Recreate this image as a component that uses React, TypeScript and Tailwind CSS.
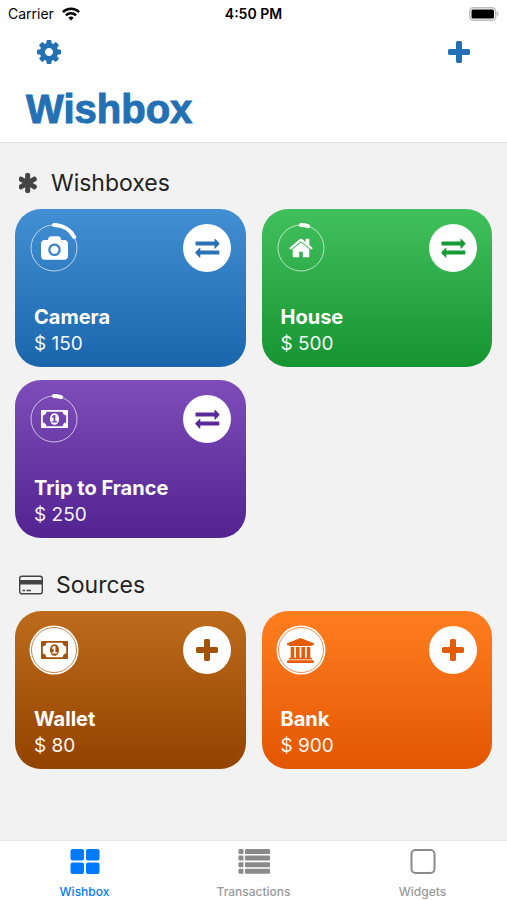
import React, { useState } from 'react';
import clsx from 'clsx';

type IconName = 'camera' | 'house' | 'money' | 'bank';

interface Box {
  id: string;
  name: string;
  amount: number;
  icon: IconName;
  progress: number;
  background: string;
  accent: string;
}

const wishboxes: Box[] = [
  {
    id: 'camera',
    name: 'Camera',
    amount: 150,
    icon: 'camera',
    progress: 0.17,
    background: 'from-[#428fd3] to-[#1a66ac]',
    accent: 'text-[#2a72b5]',
  },
  {
    id: 'house',
    name: 'House',
    amount: 500,
    icon: 'house',
    progress: 0.05,
    background: 'from-[#40c05c] to-[#159432]',
    accent: 'text-[#159a35]',
  },
  {
    id: 'france',
    name: 'Trip to France',
    amount: 250,
    icon: 'money',
    progress: 0.05,
    background: 'from-[#7e4dba] to-[#532391]',
    accent: 'text-[#5a2a9a]',
  },
];

const sources: Box[] = [
  {
    id: 'wallet',
    name: 'Wallet',
    amount: 80,
    icon: 'money',
    progress: 1,
    background: 'from-[#bd6b1b] to-[#934300]',
    accent: 'text-[#a3520a]',
  },
  {
    id: 'bank',
    name: 'Bank',
    amount: 900,
    icon: 'bank',
    progress: 1,
    background: 'from-[#ff7e1f] to-[#e35600]',
    accent: 'text-[#e55c08]',
  },
];

const CogIcon = () => (
  <svg viewBox="128 128 1536 1536" className="size-6" fill="currentColor" aria-hidden="true">
    <path d="M1152 896q0-106-75-181t-181-75-181 75-75 181 75 181 181 75 181-75 75-181zm512-109v222q0 12-8 23t-20 13l-185 28q-19 54-39 91 35 50 107 138 10 12 10 25t-9 23q-27 37-99 108t-94 71q-12 0-26-9l-138-108q-44 23-91 38-16 136-29 186-7 28-36 28h-222q-14 0-24.500-8.500t-11.500-21.500l-28-184q-49-16-90-37l-141 107q-10 9-25 9-14 0-25-11-126-114-165-168-7-10-7-23 0-12 8-23 15-21 51-66.500t54-70.500q-27-50-41-99l-183-27q-13-2-21-12.500t-8-23.500v-222q0-12 8-23t19-13l186-28q14-46 39-92-40-57-107-138-10-12-10-24 0-10 9-23 26-36 98.500-107.500t94.500-71.500q13 0 26 10l138 107q44-23 91-38 16-136 29-186 7-28 36-28h222q14 0 24.500 8.500t11.500 21.500l28 184q49 16 90 37l142-107q9-9 24-9 13 0 25 10 129 119 165 170 7 8 7 22 0 12-8 23-15 21-51 66.500t-54 70.500q26 50 41 98l183 28q13 2 21 12.500t8 23.500z" />
  </svg>
);

const PlusIcon = () => (
  <svg viewBox="192 128 1408 1408" className="size-[22px]" fill="currentColor" aria-hidden="true">
    <path d="M1600 736v192q0 40-28 68t-68 28h-416v416q0 40-28 68t-68 28h-192q-40 0-68-28t-28-68v-416h-416q-40 0-68-28t-28-68v-192q0-40 28-68t68-28h416v-416q0-40 28-68t68-28h192q40 0 68 28t28 68v416h416q40 0 68 28t28 68z" />
  </svg>
);

const ExchangeIcon = () => (
  <svg viewBox="0 0 26 20" className="h-5 w-[26px]" fill="currentColor" aria-hidden="true">
    <path d="M1.900 3.500h18.600v-2.200q0-1 .8-.4l3.900 4.200q.7.600 0 1.200l-3.900 4.200q-.8.600-.8-.4v-2.600h-18.600q-.4 0-.4-.4v-3.200q0-.4.400-.4z" />
    <path d="M24.900 12.500h-18.600v-2.200q0-1-.8-.4l-3.900 4.200q-.7.600 0 1.200l3.900 4.200q.8.600.8-.4v-2.600h18.600q.4 0 .4-.4v-3.200q0-.4-.4-.4z" />
  </svg>
);

const AsteriskIcon = () => (
  <svg viewBox="192 128 1408 1536" className="h-5 w-[19px]" fill="currentColor" aria-hidden="true">
    <path d="M1482 1050q46 26 59.500 77.500t-12.500 97.500l-64 110q-26 46-77.500 59.500t-97.500-12.500l-266-153v307q0 52-38 90t-90 38h-128q-52 0-90-38t-38-90v-307l-266 153q-46 26-97.500 12.500t-77.500-59.500l-64-110q-26-46-12.500-97.500t59.500-77.500l266-154-266-154q-46-26-59.500-77.500t12.500-97.500l64-110q26-46 77.500-59.500t97.500 12.500l266 153v-307q0-52 38-90t90-38h128q52 0 90 38t38 90v307l266-153q46-26 97.500-12.500t77.500 59.500l64 110q26 46 12.500 97.500t-59.500 77.500l-266 154z" />
  </svg>
);

const CardIcon = () => (
  <svg viewBox="0 0 24 20" className="h-5 w-6" aria-hidden="true">
    <rect x="0.700" y="1.200" width="22.600" height="17.600" rx="2.200" fill="none" stroke="currentColor" strokeWidth="1.400" />
    <path d="M.7 5h22.600v4.500H.7zM3.500 14.800h2.500v1.500H3.500zM7.500 14.800h4.500v1.500H7.500z" fill="currentColor" />
  </svg>
);

const BoxIcon = ({ name }: { name: IconName }) => {
  switch (name) {
    case 'camera':
      return (
        <svg viewBox="-64 0 1920 1664" className="h-6 w-[27px]" fill="currentColor" aria-hidden="true">
          <path d="M896 672q119 0 203.500 84.500t84.500 203.500-84.500 203.500-203.500 84.500-203.500-84.500-84.500-203.500 84.500-203.500 203.500-84.500zm704-416q106 0 181 75t75 181v896q0 106-75 181t-181 75h-1408q-106 0-181-75t-75-181v-896q0-106 75-181t181-75h224l51-136q19-49 69.500-84.500t103.500-35.500h512q53 0 103.500 35.500t69.500 84.500l51 136h224zm-704 1152q185 0 316.500-131.500t131.500-316.500-131.500-316.500-316.500-131.500-316.500 131.500-131.500 316.500 131.500 316.500 316.500 131.500z" />
        </svg>
      );
    case 'house':
      return (
        <svg viewBox="0 224 1664 1344" className="h-5 w-6" fill="currentColor" aria-hidden="true">
          <path d="M1408 992v480q0 26-19 45t-45 19h-384v-384h-256v384h-384q-26 0-45-19t-19-45v-480q0-1 .5-3t.5-3l575-474 575 474q1 2 1 6zm223-69l-62 74q-8 9-21 11h-3q-13 0-21-7l-692-577-692 577q-12 8-24 7-13-2-21-11l-62-74q-8-10-7-23.500t11-21.500l719-599q32-26 76-26t76 26l244 204v-195q0-14 9-23t23-9h192q14 0 23 9t9 23v408l219 182q10 8 11 21.500t-7 23.500z" />
        </svg>
      );
    case 'money':
      return (
        <svg viewBox="-64 256 1920 1280" className="h-[18px] w-[27px]" fill="currentColor" aria-hidden="true">
          <path d="M704 1152h384v-96h-128v-448h-114l-148 137 77 80q42-37 55-57h2v288h-128v96zm512-256q0 70-21 142t-59.500 134-101.500 101-138 39-138-39-101.500-101-59.500-134-21-142 21-142 59.500-134 101.500-101 138-39 138 39 101.500 101 59.500 134 21 142zm512 256v-512q-106 0-181-75t-75-181h-1152q0 106-75 181t-181 75v512q106 0 181 75t75 181h1152q0-106 75-181t181-75zm128-832v1152q0 26-19 45t-45 19h-1792q-26 0-45-19t-19-45v-1152q0-26 19-45t45-19h1792q26 0 45 19t19 45z" />
        </svg>
      );
    case 'bank':
      return (
        <svg viewBox="0 0 1920 1792" className="h-[25px] w-[27px]" fill="currentColor" aria-hidden="true">
          <path d="M960 0l960 384v128h-128q0 26-20.500 45t-48.500 19h-1526q-28 0-48.500-19t-20.500-45h-128v-128zm-704 640h256v768h128v-768h256v768h128v-768h256v768h128v-768h256v768h59q28 0 48.500 19t20.500 45v64h-1664v-64q0-26 20.500-45t48.500-19h59v-768zm1595 960q28 0 48.500 19t20.500 45v128h-1920v-128q0-26 20.500-45t48.500-19h1782z" />
        </svg>
      );
  }
};

const RING_LENGTH = 2 * Math.PI * 23;

const ProgressRing = ({ box }: { box: Box }) => {
  const full = box.progress >= 1;

  return (
    <div className={clsx('relative grid size-12 place-items-center', full ? box.accent : 'text-white')}>
      <svg viewBox="0 0 48 48" className="absolute inset-0 size-12 overflow-visible" fill="none" aria-hidden="true">
        {full ? (
          <>
            <circle cx="24" cy="24" r="24.500" fill="#fff" />
            <circle cx="24" cy="24" r="22.500" stroke="currentColor" strokeWidth="0.700" />
          </>
        ) : (
          <>
            <circle cx="24" cy="24" r="23" stroke="#fff" strokeOpacity="0.650" />
            <circle
              cx="24"
              cy="24"
              r="23"
              stroke="#fff"
              strokeWidth="4"
              strokeLinecap="round"
              strokeDasharray={`${RING_LENGTH * box.progress} ${RING_LENGTH}`}
              transform="rotate(-90 24 24)"
            />
          </>
        )}
      </svg>
      <span className="relative">
        <BoxIcon name={box.icon} />
      </span>
    </div>
  );
};

const BoxCard = ({ box, action }: { box: Box; action: 'transfer' | 'add' }) => (
  <article
    className={clsx(
      'flex min-h-[158px] flex-col justify-between rounded-[26px] bg-linear-to-b px-[15px] pt-[15px] pb-[10px] text-white',
      box.background,
    )}
  >
    <div className="flex items-center justify-between">
      <ProgressRing box={box} />
      <button
        type="button"
        aria-label={`${action === 'add' ? 'Add to' : 'Transfer'} ${box.name}`}
        className={clsx('grid size-12 place-items-center rounded-full bg-white', box.accent)}
      >
        {action === 'add' ? <PlusIcon /> : <ExchangeIcon />}
      </button>
    </div>
    <div className="px-1">
      <h3 className="text-xl leading-[27px] font-bold">{box.name}</h3>
      <p className="text-[19px] leading-[26px] opacity-95">$ {box.amount}</p>
    </div>
  </article>
);

interface SectionProps {
  title: string;
  icon: React.ReactNode;
  boxes: Box[];
  action: 'transfer' | 'add';
}

const Section = ({ title, icon, boxes, action }: SectionProps) => (
  <section>
    <h2 className="flex h-[52px] items-center gap-[13px] px-1 text-[23px] text-[#222]">
      <span className="text-[#444]">{icon}</span>
      {title}
    </h2>
    <div className="grid grid-cols-2 gap-x-4 gap-y-[13px]">
      {boxes.map((box) => (
        <BoxCard key={box.id} box={box} action={action} />
      ))}
    </div>
  </section>
);

const StatusBar = () => (
  <div className="grid h-7 grid-cols-3 items-center px-2 text-sm text-black">
    <div className="flex items-center gap-2">
      <span>Carrier</span>
      <svg viewBox="0 0 18 14" className="h-[14px] w-[18px]" fill="none" stroke="#000" strokeWidth="2.400" aria-hidden="true">
        <path d="M.9 5.100a11.500 11.500 0 0 1 16.200 0" />
        <path d="M3.900 8.300a7.300 7.300 0 0 1 10.200 0" />
        <path d="M9 13.600l-2.700-2.800a3.900 3.900 0 0 1 5.400 0z" fill="#000" stroke="none" />
      </svg>
    </div>
    <div className="text-center font-semibold">4:50 PM</div>
    <svg viewBox="0 0 31 14" className="h-[14px] w-[31px] justify-self-end" aria-hidden="true">
      <rect x="1.700" y="0.700" width="26" height="12.600" rx="3.600" fill="#fff" stroke="#bbb" strokeWidth="1.400" />
      <rect x="3.500" y="2.500" width="22.500" height="9" rx="1.500" fill="#000" />
      <path d="M28.800 4.800q1.800.6 1.800 2.200t-1.800 2.200z" fill="#bbb" />
    </svg>
  </div>
);

const tabs = [
  {
    id: 'wishbox',
    label: 'Wishbox',
    icon: (
      <g fill="currentColor">
        <rect x="0.500" y="0" width="13.500" height="11.500" rx="2" />
        <rect x="16" y="0" width="13.500" height="11.500" rx="2" />
        <rect x="0.500" y="13.500" width="13.500" height="11.500" rx="2" />
        <rect x="16" y="13.500" width="13.500" height="11.500" rx="2" />
      </g>
    ),
  },
  {
    id: 'transactions',
    label: 'Transactions',
    icon: (
      <g fill="currentColor">
        {[0, 6.6, 13.2, 19.8].map((y) => (
          <React.Fragment key={y}>
            <rect x="-0.500" y={y} width="5" height="5" rx="1" />
            <rect x="6" y={y} width="25" height="5" rx="1" />
          </React.Fragment>
        ))}
      </g>
    ),
  },
  {
    id: 'widgets',
    label: 'Widgets',
    icon: <rect x="3.500" y="1" width="23" height="23" rx="4" fill="none" stroke="currentColor" strokeWidth="2" />,
  },
];

export default function App() {
  const [activeTab, setActiveTab] = useState('wishbox');

  return (
    <div className="flex min-h-screen flex-col bg-[#f2f2f2] font-[Inter,sans-serif]">
      <header className="border-b border-[#dedede] bg-white">
        <StatusBar />
        <div className="flex h-12 items-center justify-between px-[37px] text-[#2470b5]">
          <button type="button" aria-label="Settings">
            <CogIcon />
          </button>
          <button type="button" aria-label="Add wishbox">
            <PlusIcon />
          </button>
        </div>
        <h1 className="px-[26px] pt-[9px] pb-[9px] font-['Liberation_Sans',sans-serif] text-[40px] leading-[48px] font-bold text-[#2470b5] [-webkit-text-stroke:1px_#2470b5]">
          Wishbox
        </h1>
      </header>

      <main className="flex flex-1 flex-col gap-[21px] px-[15px] pt-[14px] pb-6">
        <Section title="Wishboxes" icon={<AsteriskIcon />} boxes={wishboxes} action="transfer" />
        <Section title="Sources" icon={<CardIcon />} boxes={sources} action="add" />
      </main>

      <nav className="grid h-[60px] grid-cols-3 border-t border-[#e8e8e8] bg-white">
        {tabs.map((tab) => (
          <button
            key={tab.id}
            type="button"
            onClick={() => setActiveTab(tab.id)}
            className={clsx(
              'flex flex-col items-center gap-[10px] pt-2 text-xs',
              activeTab === tab.id ? 'font-medium text-[#007aff]' : 'font-medium text-[#999]',
            )}
          >
            <svg
              viewBox="0 0 30 25"
              className={clsx('h-[25px] w-[30px] overflow-visible', activeTab !== tab.id && 'text-[#8a8a8a]')}
              aria-hidden="true"
            >
              {tab.icon}
            </svg>
            {tab.label}
          </button>
        ))}
      </nav>
    </div>
  );
}
